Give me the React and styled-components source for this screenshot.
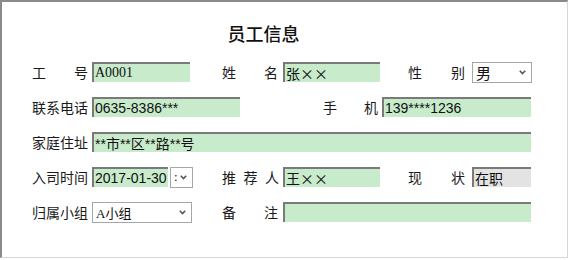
import React from 'react';
import styled, { createGlobalStyle } from 'styled-components';

const GlobalStyle = createGlobalStyle`
  html, body {
    margin: 0;
    padding: 0;
    background: #ffffff;
  }
  body {
    font-family: "Liberation Sans", "Noto Sans CJK SC", sans-serif;
  }
`;

// outer panel with a sunken edge
const Panel = styled.div`
  box-sizing: border-box;
  width: 568px;
  height: 258px;
  border-top: 2px solid #8a8a8a;
  border-left: 2px solid #8a8a8a;
  border-right: 1px solid #d6d6d6;
  border-bottom: 1px solid #d6d6d6;
  padding: 20px 0 0 30px;
  background: #fff;
`;

const Title = styled.h1`
  width: 463px;
  margin: 0 0 18px 0;
  height: 22px;
  line-height: 22px;
  text-align: center;
  font-family: "Noto Sans CJK SC", sans-serif;
  font-size: 18px;
  font-weight: 500;
  color: #111;
`;

const Form = styled.div`
  display: flex;
  flex-direction: column;
  gap: 15px;
`;

const Row = styled.div`
  display: flex;
  align-items: center;
  height: 20px;
`;

const Label = styled.div`
  display: flex;
  justify-content: space-between;
  width: ${p => p.$w || 56}px;
  margin-left: ${p => p.$ml || 0}px;
  font-family: "Noto Sans CJK SC", sans-serif;
  font-size: 14px;
  line-height: 20px;
  color: #1a1a1a;
  flex-shrink: 0;
`;

const Field = styled.input`
  box-sizing: border-box;
  width: ${p => p.$w}px;
  height: 20px;
  margin: 0 0 0 ${p => p.$ml || 0}px;
  padding: 0 0 0 1px;
  border: none;
  border-top: 2px solid #7a7a7a;
  border-left: 2px solid #7a7a7a;
  background: ${p => (p.$gray ? '#e3e3e3' : '#c7ebcb')};
  font-family: ${p => (p.$cjk ? '"Noto Sans CJK SC", sans-serif' : '"Liberation Sans", "Noto Sans CJK SC", sans-serif')};
  font-size: 14px;
  color: #111;
  outline: none;
  flex-shrink: 0;
`;

const SelectBox = styled.div`
  box-sizing: border-box;
  display: flex;
  align-items: center;
  justify-content: space-between;
  width: ${p => p.$w}px;
  height: 21px;
  margin-left: ${p => p.$ml || 0}px;
  padding: 0 5px 0 3px;
  border: 1px solid #a6a6a6;
  background: #fff;
  font-family: "Liberation Serif", "Noto Sans CJK SC", serif;
  font-size: ${p => p.$fs || 13}px;
  color: #111;
  flex-shrink: 0;
`;

const Chevron = () => (
  <svg width="7" height="5" viewBox="0 0 7 5">
    <path d="M0.8 0.8 L3.5 3.6 L6.2 0.8" fill="none" stroke="#555" strokeWidth="1.6" />
  </svg>
);

const Spaced = ({ text, w, ml }) => (
  <Label $w={w} $ml={ml}>
    {text.split('').map((c, i) => <span key={i}>{c}</span>)}
  </Label>
);

const App = () => (
  <>
    <GlobalStyle />
    <Panel>
      <Title>员工信息</Title>
      <Form>
        <Row>
          <Spaced text="工号" />
          <Field $ml={4} $w={98} defaultValue="A0001" readOnly style={{ fontFamily: '"Liberation Serif", serif' }} />
          <Spaced text="姓名" ml={32} />
          <Field $ml={5} $w={97} $cjk defaultValue="张××" readOnly />
          <Spaced text="性别" ml={28} w={57} />
          <SelectBox $ml={7} $w={60} $fs={15} style={{ fontFamily: '"Noto Sans CJK SC", sans-serif' }}>
            <span>男</span>
            <Chevron />
          </SelectBox>
        </Row>
        <Row>
          <Spaced text="联系电话" />
          <Field $ml={4} $w={148} defaultValue="0635-8386***" readOnly />
          <Spaced text="手机" ml={83} w={55} />
          <Field $ml={4} $w={149} defaultValue="139****1236" readOnly />
        </Row>
        <Row>
          <Spaced text="家庭住址" />
          <Field $ml={4} $w={439} defaultValue="**市**区**路**号" readOnly />
        </Row>
        <Row>
          <Spaced text="入司时间" />
          <Field $ml={4} $w={76} defaultValue="2017-01-30" readOnly />
          <SelectBox $ml={2} $w={23}>
            <span>:</span>
            <Chevron />
          </SelectBox>
          <Spaced text="推荐人" ml={29} w={57} />
          <Field $ml={4} $w={97} $cjk defaultValue="王××" readOnly />
          <Spaced text="现状" ml={28} w={57} />
          <Field $ml={7} $w={59} $gray $cjk defaultValue="在职" readOnly />
        </Row>
        <Row>
          <Spaced text="归属小组" />
          <SelectBox $ml={4} $w={100}>
            <span>A小组</span>
            <Chevron />
          </SelectBox>
          <Spaced text="备注" ml={30} />
          <Field $ml={5} $w={248} defaultValue="" readOnly />
        </Row>
      </Form>
    </Panel>
  </>
);

export default App;
